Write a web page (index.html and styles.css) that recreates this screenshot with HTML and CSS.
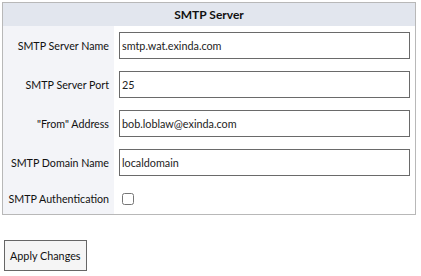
FILE: index.html
```html
<!DOCTYPE html>
<html lang="en">
<head>
  <meta charset="UTF-8">
  <title>SMTP Server</title>
  <link rel="stylesheet" href="styles.css">
</head>
<body>
  <table class="settings">
    <tr>
      <th colspan="2" class="title">SMTP Server</th>
    </tr>
    <tr>
      <td class="label">SMTP Server Name</td>
      <td class="field"><input type="text" value="smtp.wat.exinda.com"></td>
    </tr>
    <tr>
      <td class="label">SMTP Server Port</td>
      <td class="field"><input type="text" value="25"></td>
    </tr>
    <tr>
      <td class="label">"From" Address</td>
      <td class="field"><input type="text" value="bob.loblaw@exinda.com"></td>
    </tr>
    <tr>
      <td class="label">SMTP Domain Name</td>
      <td class="field"><input type="text" value="localdomain"></td>
    </tr>
    <tr>
      <td class="label">SMTP Authentication</td>
      <td class="field"><input type="checkbox" class="check"></td>
    </tr>
  </table>
  <button class="btn">Apply Changes</button>
</body>
</html>
```

FILE: styles.css
```css
body {
  margin: 2px;
  font-family: Lato, "Open Sans", sans-serif;
  font-size: 10.7px;
  color: #111;
  background: #fff;
}
.settings {
  border-collapse: collapse;
  border: 1px solid #b8b8b8;
  width: 414px;
}
.title {
  background: #e2e6ee;
  height: 23px;
  padding: 0;
  font-weight: bold;
  font-size: 12px;
  text-align: center;
}
.label {
  background: #f3f4f8;
  width: 106px;
  padding: 0 5px 0 0;
  text-align: right;
  white-space: nowrap;
  height: 39px;
}
.field {
  padding: 0 5px 0 5px;
}
.field input[type="text"] {
  box-sizing: border-box;
  width: 100%;
  height: 27px;
  margin: 0;
  padding: 0 2px;
  border: 1px solid #6a6a6a;
  font-family: Lato, sans-serif;
  font-size: 10.8px;
  color: #222;
  display: block;
}
.check {
  margin: 0 0 0 3px;
  width: 12px;
  height: 12px;
  vertical-align: middle;
}
tr:last-child .label {
  height: 32px;
}
.btn {
  margin-top: 25px;
  margin-left: 2px;
  height: 31px;
  padding: 0 5px;
  background: #f5f5f5;
  border: 1px solid #666;
  border-radius: 0;
  font-family: Lato, sans-serif;
  font-size: 10.8px;
  color: #111;
}
```
